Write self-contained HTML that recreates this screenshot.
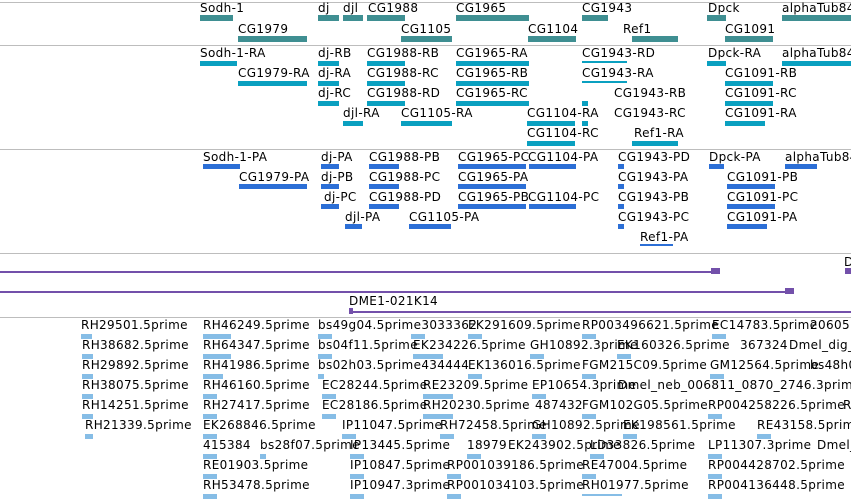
<!DOCTYPE html><html><head><style>
body{margin:0;width:851px;height:501px;overflow:hidden;background:#fff;position:relative;font-family:"DejaVu Sans","Liberation Sans",sans-serif;font-size:12px;color:#000}
i{position:absolute;font-style:normal;white-space:nowrap;line-height:14px;letter-spacing:0.35px}
b{position:absolute;height:6px}
.s{position:absolute;left:0;width:851px;height:1px;background:#bdbdbd}
.g{background:#3f8f92}.t{background:#0aa0c0;height:5px}.p{background:#2c6fd6;height:5px}.e{background:#86bde6;height:5px;width:14px}
.l{position:absolute;left:0;height:2px;background:#7350aa}
</style></head><body>
<div class="s" style="top:2px"></div><div class="s" style="top:45px"></div><div class="s" style="top:149px"></div><div class="s" style="top:253px"></div><div class="s" style="top:317px"></div>

<i style="left:200px;top:1px">Sodh-1</i><b class="g" style="left:200px;top:15px;width:33px"></b>
<i style="left:318px;top:1px">dj</i><b class="g" style="left:318px;top:15px;width:21px"></b>
<i style="left:343px;top:1px">djl</i><b class="g" style="left:343px;top:15px;width:20px"></b>
<i style="left:368px;top:1px">CG1988</i><b class="g" style="left:367px;top:15px;width:38px"></b>
<i style="left:456px;top:1px">CG1965</i><b class="g" style="left:456px;top:15px;width:73px"></b>
<i style="left:582px;top:1px">CG1943</i><b class="g" style="left:582px;top:15px;width:26px"></b>
<i style="left:708px;top:1px">Dpck</i><b class="g" style="left:707px;top:15px;width:19px"></b>
<i style="left:782px;top:1px">alphaTub84</i><b class="g" style="left:782px;top:15px;width:69px"></b>
<i style="left:238px;top:22px">CG1979</i><b class="g" style="left:238px;top:36px;width:69px"></b>
<i style="left:401px;top:22px">CG1105</i><b class="g" style="left:401px;top:36px;width:51px"></b>
<i style="left:528px;top:22px">CG1104</i><b class="g" style="left:528px;top:36px;width:48px"></b>
<i style="left:623px;top:22px">Ref1</i><b class="g" style="left:632px;top:36px;width:46px"></b>
<i style="left:725px;top:22px">CG1091</i><b class="g" style="left:725px;top:36px;width:48px"></b>

<i style="left:200px;top:46px">Sodh-1-RA</i><b class="t" style="left:200px;top:61px;width:37px"></b>
<i style="left:318px;top:46px">dj-RB</i><b class="t" style="left:318px;top:61px;width:21px"></b>
<i style="left:367px;top:46px">CG1988-RB</i><b class="t" style="left:367px;top:61px;width:38px"></b>
<i style="left:456px;top:46px">CG1965-RA</i><b class="t" style="left:456px;top:61px;width:73px"></b>
<i style="left:582px;top:46px">CG1943-RD</i><b class="t" style="left:582px;top:61px;width:45px;height:2px"></b>
<i style="left:708px;top:46px">Dpck-RA</i><b class="t" style="left:707px;top:61px;width:19px"></b>
<i style="left:782px;top:46px">alphaTub84</i><b class="t" style="left:782px;top:61px;width:69px"></b>
<i style="left:238px;top:66px">CG1979-RA</i><b class="t" style="left:238px;top:81px;width:69px"></b>
<i style="left:318px;top:66px">dj-RA</i><b class="t" style="left:318px;top:81px;width:21px"></b>
<i style="left:367px;top:66px">CG1988-RC</i><b class="t" style="left:367px;top:81px;width:38px"></b>
<i style="left:456px;top:66px">CG1965-RB</i><b class="t" style="left:456px;top:81px;width:73px"></b>
<i style="left:582px;top:66px">CG1943-RA</i><b class="t" style="left:582px;top:81px;width:45px;height:2px"></b>
<i style="left:725px;top:66px">CG1091-RB</i><b class="t" style="left:725px;top:81px;width:48px"></b>
<i style="left:318px;top:86px">dj-RC</i><b class="t" style="left:318px;top:101px;width:21px"></b>
<i style="left:367px;top:86px">CG1988-RD</i><b class="t" style="left:367px;top:101px;width:38px"></b>
<i style="left:456px;top:86px">CG1965-RC</i><b class="t" style="left:456px;top:101px;width:73px"></b>
<i style="left:614px;top:86px">CG1943-RB</i><b class="t" style="left:582px;top:101px;width:6px"></b>
<i style="left:725px;top:86px">CG1091-RC</i><b class="t" style="left:725px;top:101px;width:48px"></b>
<i style="left:343px;top:106px">djl-RA</i><b class="t" style="left:343px;top:121px;width:20px"></b>
<i style="left:401px;top:106px">CG1105-RA</i><b class="t" style="left:401px;top:121px;width:51px"></b>
<i style="left:527px;top:106px">CG1104-RA</i><b class="t" style="left:527px;top:121px;width:48px"></b>
<i style="left:614px;top:106px">CG1943-RC</i><b class="t" style="left:582px;top:121px;width:6px"></b>
<i style="left:725px;top:106px">CG1091-RA</i><b class="t" style="left:725px;top:121px;width:40px"></b>
<i style="left:527px;top:126px">CG1104-RC</i><b class="t" style="left:527px;top:141px;width:48px"></b>
<i style="left:634px;top:126px">Ref1-RA</i><b class="t" style="left:632px;top:141px;width:46px"></b>

<i style="left:203px;top:150px">Sodh-1-PA</i><b class="p" style="left:203px;top:164px;width:37px"></b>
<i style="left:321px;top:150px">dj-PA</i><b class="p" style="left:321px;top:164px;width:18px"></b>
<i style="left:369px;top:150px">CG1988-PB</i><b class="p" style="left:369px;top:164px;width:30px"></b>
<i style="left:458px;top:150px">CG1965-PC</i><b class="p" style="left:458px;top:164px;width:68px"></b>
<i style="left:528px;top:150px">CG1104-PA</i><b class="p" style="left:529px;top:164px;width:47px"></b>
<i style="left:618px;top:150px">CG1943-PD</i><b class="p" style="left:618px;top:164px;width:6px"></b>
<i style="left:709px;top:150px">Dpck-PA</i><b class="p" style="left:709px;top:164px;width:15px"></b>
<i style="left:785px;top:150px">alphaTub84</i><b class="p" style="left:785px;top:164px;width:32px"></b>
<i style="left:239px;top:170px">CG1979-PA</i><b class="p" style="left:239px;top:184px;width:68px"></b>
<i style="left:321px;top:170px">dj-PB</i><b class="p" style="left:321px;top:184px;width:18px"></b>
<i style="left:369px;top:170px">CG1988-PC</i><b class="p" style="left:369px;top:184px;width:30px"></b>
<i style="left:458px;top:170px">CG1965-PA</i><b class="p" style="left:458px;top:184px;width:68px"></b>
<i style="left:618px;top:170px">CG1943-PA</i><b class="p" style="left:618px;top:184px;width:6px"></b>
<i style="left:727px;top:170px">CG1091-PB</i><b class="p" style="left:727px;top:184px;width:48px"></b>
<i style="left:324px;top:190px">dj-PC</i><b class="p" style="left:321px;top:204px;width:18px"></b>
<i style="left:369px;top:190px">CG1988-PD</i><b class="p" style="left:369px;top:204px;width:30px"></b>
<i style="left:458px;top:190px">CG1965-PB</i><b class="p" style="left:458px;top:204px;width:68px"></b>
<i style="left:528px;top:190px">CG1104-PC</i><b class="p" style="left:529px;top:204px;width:47px"></b>
<i style="left:618px;top:190px">CG1943-PB</i><b class="p" style="left:618px;top:204px;width:6px"></b>
<i style="left:727px;top:190px">CG1091-PC</i><b class="p" style="left:727px;top:204px;width:48px"></b>
<i style="left:345px;top:210px">djl-PA</i><b class="p" style="left:345px;top:224px;width:17px"></b>
<i style="left:409px;top:210px">CG1105-PA</i><b class="p" style="left:409px;top:224px;width:42px"></b>
<i style="left:618px;top:210px">CG1943-PC</i><b class="p" style="left:618px;top:224px;width:6px"></b>
<i style="left:727px;top:210px">CG1091-PA</i><b class="p" style="left:727px;top:224px;width:40px"></b>
<i style="left:640px;top:230px">Ref1-PA</i><b class="p" style="left:640px;top:244px;width:33px;height:2px"></b>

<div class="l" style="top:271px;width:718px"></div><b style="left:711px;top:268px;width:9px;background:#7350aa"></b>
<i style="left:844px;top:255px">D</i><b style="left:845px;top:268px;width:6px;background:#7350aa"></b>
<div class="l" style="top:291px;width:793px"></div><b style="left:785px;top:288px;width:9px;background:#7350aa"></b>
<i style="left:349px;top:294px">DME1-021K14</i>
<div class="l" style="top:311px;left:349px;width:502px"></div><b style="left:349px;top:308px;width:4px;background:#7350aa"></b>

<i style="left:81px;top:318px">RH29501.5prime</i><b class="e" style="left:81px;top:334px;width:11px"></b>
<i style="left:203px;top:318px">RH46249.5prime</i><b class="e" style="left:203px;top:334px;width:28px"></b>
<i style="left:318px;top:318px">bs49g04.5prime3033362</i><b class="e" style="left:318px;top:334px"></b>
<i style="left:468px;top:318px">EK291609.5prime</i><b class="e" style="left:411px;top:334px"></b>
<i style="left:582px;top:318px">RP003496621.5prime</i><b class="e" style="left:468px;top:334px"></b>
<i style="left:712px;top:318px">EC14783.5prime</i><b class="e" style="left:582px;top:334px"></b>
<i style="left:810px;top:318px">20605</i><b class="e" style="left:712px;top:334px"></b>
<i style="left:82px;top:338px">RH38682.5prime</i><b class="e" style="left:82px;top:354px;width:11px"></b>
<i style="left:203px;top:338px">RH64347.5prime</i><b class="e" style="left:203px;top:354px;width:28px"></b>
<i style="left:318px;top:338px">bs04f11.5prime</i><b class="e" style="left:318px;top:354px"></b>
<i style="left:413px;top:338px">EK234226.5prime</i><b class="e" style="left:413px;top:354px;width:30px"></b>
<i style="left:530px;top:338px">GH10892.3prime</i><b class="e" style="left:530px;top:354px"></b>
<i style="left:617px;top:338px">EK160326.5prime</i><b class="e" style="left:617px;top:354px"></b>
<i style="left:740px;top:338px">367324</i><i style="left:789px;top:338px">Dmel_dig_</i>
<i style="left:82px;top:358px">RH29892.5prime</i><b class="e" style="left:82px;top:374px;width:11px"></b>
<i style="left:203px;top:358px">RH41986.5prime</i><b class="e" style="left:203px;top:374px;width:20px"></b>
<i style="left:318px;top:358px">bs02h03.5prime434444</i><b class="e" style="left:318px;top:374px;width:6px"></b>
<i style="left:468px;top:358px">EK136016.5prime</i><b class="e" style="left:468px;top:374px"></b>
<i style="left:582px;top:358px">FGM215C09.5prime</i><b class="e" style="left:582px;top:374px"></b>
<i style="left:710px;top:358px">GM12564.5prime</i><b class="e" style="left:710px;top:374px"></b>
<i style="left:810px;top:358px">bs48h0</i>
<i style="left:82px;top:378px">RH38075.5prime</i><b class="e" style="left:82px;top:394px;width:11px"></b>
<i style="left:203px;top:378px">RH46160.5prime</i><b class="e" style="left:203px;top:394px"></b>
<i style="left:322px;top:378px">EC28244.5prime</i><b class="e" style="left:322px;top:394px"></b>
<i style="left:423px;top:378px">RE23209.5prime</i><b class="e" style="left:423px;top:394px;width:30px"></b>
<i style="left:532px;top:378px">EP10654.3prime</i><b class="e" style="left:532px;top:394px"></b>
<i style="left:618px;top:378px">Dmel_neb_006811_0870_2746.3prime</i>
<i style="left:82px;top:398px">RH14251.5prime</i><b class="e" style="left:82px;top:414px;width:11px"></b>
<i style="left:203px;top:398px">RH27417.5prime</i><b class="e" style="left:203px;top:414px"></b>
<i style="left:322px;top:398px">EC28186.5prime</i><b class="e" style="left:322px;top:414px"></b>
<i style="left:423px;top:398px">RH20230.5prime</i><b class="e" style="left:423px;top:414px;width:30px"></b>
<i style="left:535px;top:398px">487432</i><i style="left:582px;top:398px">FGM102G05.5prime</i><b class="e" style="left:582px;top:414px"></b>
<i style="left:708px;top:398px">RP004258226.5prime</i><b class="e" style="left:708px;top:414px"></b>
<i style="left:843px;top:398px">R</i>
<i style="left:85px;top:418px">RH21339.5prime</i><b class="e" style="left:85px;top:434px;width:8px"></b>
<i style="left:203px;top:418px">EK268846.5prime</i><b class="e" style="left:203px;top:434px"></b>
<i style="left:342px;top:418px">IP11047.5prime</i><b class="e" style="left:342px;top:434px"></b>
<i style="left:440px;top:418px">RH72458.5prime</i><b class="e" style="left:440px;top:434px"></b>
<i style="left:532px;top:418px">GH10892.5prime</i><b class="e" style="left:532px;top:434px"></b>
<i style="left:623px;top:418px">EK198561.5prime</i><b class="e" style="left:623px;top:434px"></b>
<i style="left:757px;top:418px">RE43158.5prime</i><b class="e" style="left:757px;top:434px"></b>
<i style="left:203px;top:438px">415384</i><b class="e" style="left:203px;top:454px"></b>
<i style="left:260px;top:438px">bs28f07.5prime</i><b class="e" style="left:260px;top:454px;width:6px"></b>
<i style="left:350px;top:438px">IP13445.5prime</i><b class="e" style="left:350px;top:454px"></b>
<i style="left:467px;top:438px">18979</i><i style="left:508px;top:438px">EK243902.5prime</i><b class="e" style="left:467px;top:454px"></b>
<i style="left:590px;top:438px">LD33826.5prime</i><b class="e" style="left:590px;top:454px"></b>
<i style="left:708px;top:438px">LP11307.3prime</i><b class="e" style="left:708px;top:454px"></b>
<i style="left:817px;top:438px">Dmel_</i>
<i style="left:203px;top:458px">RE01903.5prime</i><b class="e" style="left:203px;top:474px"></b>
<i style="left:350px;top:458px">IP10847.5prime</i><b class="e" style="left:350px;top:474px"></b>
<i style="left:447px;top:458px">RP001039186.5prime</i><b class="e" style="left:447px;top:474px"></b>
<i style="left:582px;top:458px">RE47004.5prime</i><b class="e" style="left:582px;top:474px"></b>
<i style="left:708px;top:458px">RP004428702.5prime</i><b class="e" style="left:708px;top:474px"></b>
<i style="left:203px;top:478px">RH53478.5prime</i><b class="e" style="left:203px;top:494px"></b>
<i style="left:350px;top:478px">IP10947.3prime</i><b class="e" style="left:350px;top:494px"></b>
<i style="left:447px;top:478px">RP001034103.5prime</i><b class="e" style="left:447px;top:494px"></b>
<i style="left:582px;top:478px">RH01977.5prime</i><b class="e" style="left:582px;top:494px;width:40px;height:2px"></b>
<i style="left:708px;top:478px">RP004136448.5prime</i><b class="e" style="left:708px;top:494px"></b>
</body></html>
